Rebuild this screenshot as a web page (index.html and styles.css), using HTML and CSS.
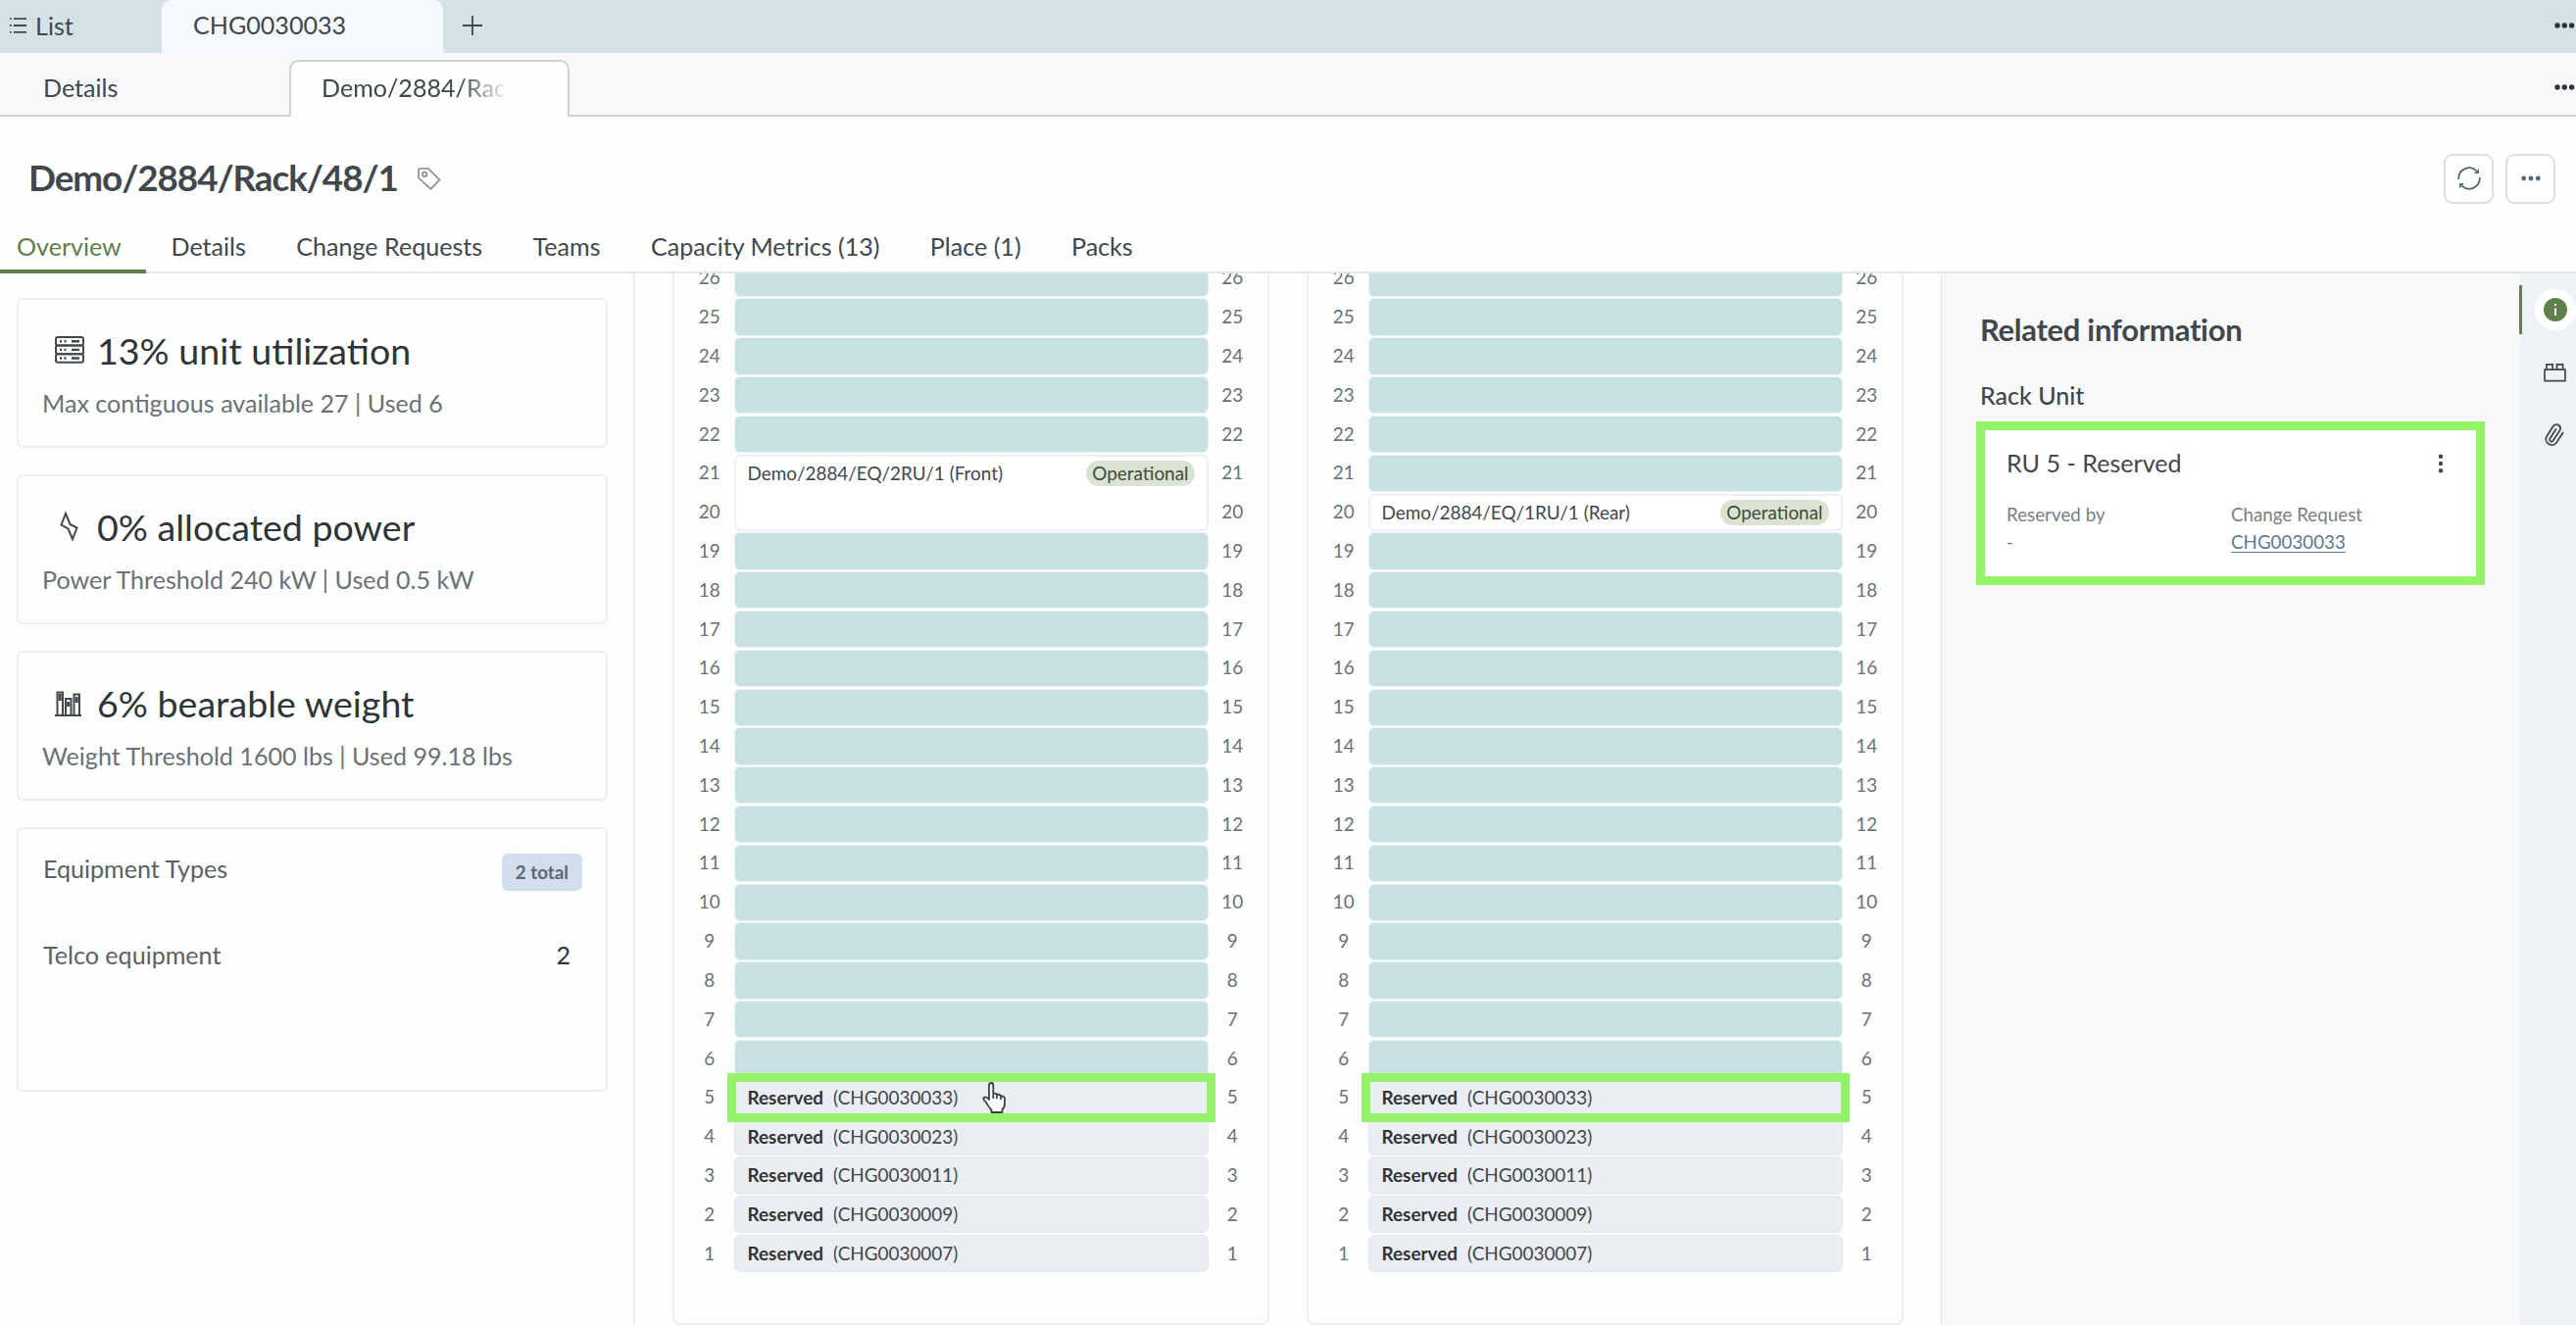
FILE: index.html
```
<!DOCTYPE html>
<html lang="en">
<head>
  <meta charset="utf-8">
  <title>Demo/2884/Rack/48/1</title>
  <link rel="stylesheet" href="styles.css">
</head>
<body>
  <div class="topbar">
    <div class="top-list">
      <svg class="icon-list" viewBox="0 0 18 16"><path d="M4 1.2H17M4 8H17M4 14.8H17M0 1.2H1.6M0 8H1.6M0 14.8H1.6"/></svg>
      List
    </div>
    <div class="top-tab">CHG0030033</div>
    <svg class="icon-plus" viewBox="0 0 20 20"><path d="M10 0V20M0 10H20"/></svg>
    <svg class="more" viewBox="0 0 22 6"><circle cx="3" cy="3" r="2.7"/><circle cx="10.3" cy="3" r="2.7"/><circle cx="17.6" cy="3" r="2.7"/></svg>
  </div>

  <div class="subbar">
    <div class="sub-tab">Details</div>
    <div class="sub-tab active"><span class="sub-label">Demo/2884/Rac</span></div>
    <svg class="more" viewBox="0 0 22 6"><circle cx="3" cy="3" r="2.7"/><circle cx="10.3" cy="3" r="2.7"/><circle cx="17.6" cy="3" r="2.7"/></svg>
  </div>

  <div class="header">
    <h1>Demo/2884/Rack/48/1</h1>
    <svg class="icon-tag" viewBox="0 0 24 23"><path d="M1 2.5Q1 1 2.5 1H11L22.5 12.5L13.5 21.8L1 10.5Z"/><circle cx="7.2" cy="6.8" r="2.3"/></svg>
    <div class="actions">
      <button class="btn">
        <svg class="icon-refresh" viewBox="0 0 24 24"><path d="M1.2 13A10.9 10.9 0 0 1 19.5 4.3M22.8 11A10.9 10.9 0 0 1 4.5 19.7"/><path class="tip" d="M17 7L22 7V2ZM7 17H2V22Z"/></svg>
      </button>
      <button class="btn">
        <svg class="icon-dots" viewBox="0 0 20 6"><circle cx="2.7" cy="3" r="2.4"/><circle cx="10" cy="3" r="2.4"/><circle cx="17.3" cy="3" r="2.4"/></svg>
      </button>
    </div>
  </div>

  <div class="tabs">
    <div class="tab active">Overview</div>
    <div class="tab">Details</div>
    <div class="tab">Change Requests</div>
    <div class="tab">Teams</div>
    <div class="tab">Capacity Metrics (13)</div>
    <div class="tab">Place (1)</div>
    <div class="tab">Packs</div>
  </div>

  <div class="main">
    <div class="metrics">
      <div class="card">
        <div class="card-title">
          <svg class="icon-rack" viewBox="0 0 30 28">
            <rect x="1" y="1" width="28" height="8.6" rx="2"/><rect x="1" y="9.6" width="28" height="8.6" rx="2"/><rect x="1" y="18.2" width="28" height="8.6" rx="2"/>
            <path d="M5 5.3H7M9.5 5.3H11.5M17 5.3H25M5 13.9H7M9.5 13.9H11.5M17 13.9H25M5 22.5H7M9.5 22.5H11.5M17 22.5H25"/>
          </svg>
          13% unit utilization
        </div>
        <div class="card-sub">Max contiguous available 27 | Used 6</div>
      </div>

      <div class="card">
        <div class="card-title">
          <svg class="icon-power" viewBox="0 0 30 28"><path d="M11 1L6.5 12.5L13.5 16.5L18 27L22.5 15.5L15.5 12Z"/></svg>
          0% allocated power
        </div>
        <div class="card-sub">Power Threshold 240 kW | Used 0.5 kW</div>
      </div>

      <div class="card">
        <div class="card-title">
          <svg class="icon-weight" viewBox="0 0 30 28"><path d="M0 27H27M2.5 26V3.500H8V26M11 26V10H16.500V26M19.500 26V5.500H25V26"/><path class="thick" d="M5.2 12V5M13.7 18V13M22.2 14V8"/></svg>
          6% bearable weight
        </div>
        <div class="card-sub">Weight Threshold 1600 lbs | Used 99.18 lbs</div>
      </div>

      <div class="card types">
        <div class="types-head">
          <span>Equipment Types</span>
          <span class="total">2 total</span>
        </div>
        <div class="types-row">
          <span>Telco equipment</span>
          <span class="count">2</span>
        </div>
      </div>
    </div>

    <div class="racks">
      <div class="rack"><div class="units" id="front"></div></div>
      <div class="rack"><div class="units" id="rear"></div></div>
    </div>

    <div class="side">
      <h2>Related information</h2>
      <h3>Rack Unit</h3>
      <div class="info">
        <div class="info-head">
          <span>RU 5 - Reserved</span>
          <svg class="icon-kebab" viewBox="0 0 6 20"><circle cx="3" cy="2.7" r="2.2"/><circle cx="3" cy="10" r="2.2"/><circle cx="3" cy="17.3" r="2.2"/></svg>
        </div>
        <div class="info-fields">
          <div>
            <div class="field-label">Reserved by</div>
            <div class="field-value">-</div>
          </div>
          <div>
            <div class="field-label">Change Request</div>
            <a class="field-value">CHG0030033</a>
          </div>
        </div>
      </div>
    </div>

    <div class="rail">
      <div class="rail-item active">
        <span class="halo">
          <svg class="icon-info" viewBox="0 0 24 24"><circle cx="12" cy="12" r="12"/><path d="M12 10.5V18M12 6V8"/></svg>
        </span>
      </div>
      <div class="rail-item">
        <svg class="icon-brick" viewBox="0 0 24 20"><path d="M1 6.5H23V18.5H1ZM3 6.5V1H9.5V6.5M14 6.5V1H20.5V6.5"/></svg>
      </div>
      <div class="rail-item">
        <svg class="icon-clip" viewBox="0 0 24 24"><path transform="rotate(-12 12 12)" d="M21.4 11L12.2 20.2A6 6 0 0 1 3.8 11.8L13 2.600A4 4 0 0 1 18.600 8.200L9.400 17.400A2 2 0 0 1 6.600 14.600L15.100 6.100"/></svg>
      </div>
    </div>
  </div>
  <script src="script.js"></script>
</body>
</html>
```

FILE: styles.css
```
:root {
  --text: #42474b;
  --text-secondary: #6c7174;
  --green: #5f7f4c;
  --highlight: #94f268;
  --border: #eceeef;
  --available: #c7e0e2;
  --reserved: #eaedf2;
}

* {
  box-sizing: border-box;
}

body {
  width: 2628px;
  height: 1352px;
  margin: 0;
  overflow: hidden;
  display: flex;
  flex-direction: column;
  font-family: Lato, "Liberation Sans", sans-serif;
  font-size: 25.1px;
  color: var(--text);
  background: #fdfefe;
}

svg {
  fill: none;
  stroke: currentColor;
  flex: none;
  overflow: visible;
}

/* Workspace tabs */
.topbar {
  display: flex;
  align-items: center;
  height: 54px;
  flex: none;
  background: #d4e2e8;
}

.top-list {
  display: flex;
  align-items: center;
  gap: 8px;
  width: 165px;
  padding: 0 0 3px 10px;
}

.icon-list {
  width: 18px;
  height: 16px;
  stroke-width: 1.8;
}

.top-tab {
  width: 287px;
  height: 54px;
  padding-left: 32px;
  line-height: 51px;
  border-radius: 10px 10px 0 0;
  background: #f5f9fb;
}

.icon-plus {
  width: 20px;
  height: 20px;
  margin: 0 0 3px 20px;
  stroke-width: 1.8;
}

.more {
  width: 22px;
  height: 6px;
  margin-left: auto;
  margin-bottom: 2px;
  fill: #2e3338;
  stroke: none;
}

.subbar {
  display: flex;
  align-items: center;
  height: 65px;
  flex: none;
  background: #f7f8f9;
  box-shadow: inset 0 -2px #cfd2d4;
}

.sub-tab {
  width: 295px;
  padding: 4px 0 0 44px;
}

.sub-tab.active {
  align-self: flex-end;
  width: 286px;
  height: 58px;
  padding: 0 0 0 31px;
  line-height: 52px;
  border: 2px solid #cfd2d4;
  border-bottom: 0;
  border-radius: 10px 10px 0 0;
  background: #fdfefe;
}

.sub-label {
  display: block;
  width: 200px;
  white-space: nowrap;
  -webkit-mask-image: linear-gradient(to right, #000 140px, transparent 192px);
  mask-image: linear-gradient(to right, #000 140px, transparent 192px);
}

.subbar .more {
  margin: 5px 0 0 auto;
}

/* Record header */
.header {
  display: flex;
  align-items: center;
  height: 110px;
  flex: none;
  padding: 16px 21px 0 29px;
}

h1 {
  margin: 0 20px 3px 0;
  font-size: 36.8px;
  font-weight: 700;
  letter-spacing: -1.05px;
}

.icon-tag {
  width: 24px;
  height: 23px;
  stroke: #85898c;
  stroke-width: 1.6;
}

.actions {
  display: flex;
  gap: 12px;
  margin-left: auto;
}

.btn {
  display: flex;
  align-items: center;
  justify-content: center;
  width: 51px;
  height: 51px;
  padding: 0;
  border: 2px solid #dcdee0;
  border-radius: 9px;
  color: #536878;
  background: #fff;
}

.icon-refresh {
  width: 24px;
  height: 24px;
  stroke-width: 1.8;
}

.icon-refresh .tip {
  fill: currentColor;
  stroke: none;
}

.icon-dots {
  width: 20px;
  height: 6px;
  fill: currentColor;
  stroke: none;
}

.tabs {
  display: flex;
  height: 50px;
  flex: none;
  border-bottom: 2px solid #e4e6e8;
}

.tab {
  height: 50px;
  padding: 0 25.7px;
  line-height: 44px;
}

.tab.active {
  padding: 0 25px 0 17px;
  color: var(--green);
  border-bottom: 4px solid var(--green);
}

/* Content */
.main {
  display: flex;
  flex: 1;
  min-height: 0;
}

.metrics {
  display: flex;
  flex-direction: column;
  gap: 27px;
  width: 648px;
  padding: 25px 26px 0 17px;
  border-right: 2px solid var(--border);
}

.card {
  height: 153px;
  padding: 28px 25px 0 24px;
  border: 2px solid var(--border);
  border-radius: 6px;
}

.card-title {
  display: flex;
  align-items: center;
  gap: 13px;
  height: 46px;
  padding-left: 13px;
  font-size: 37.6px;
  color: #2f3437;
}

.card-title svg {
  width: 30px;
  height: 28px;
  stroke: #43484b;
  stroke-width: 2;
}

.card-title .thick {
  stroke-width: 3;
}

.icon-rack path {
  stroke-width: 2.4;
}

.card-sub {
  margin-top: 16px;
  line-height: 30px;
  color: var(--text-secondary);
}

.card.types {
  height: 270px;
  padding: 25px 24px 0 25px;
}

.types-head,
.types-row {
  display: flex;
  justify-content: space-between;
  color: #5c6164;
}

.types-head {
  line-height: 30px;
}

.total {
  height: 38px;
  padding: 0 14px;
  border-radius: 6px;
  font-size: 18.8px;
  font-weight: 700;
  line-height: 38px;
  color: #5c6977;
  background: #d2deec;
}

.types-row {
  margin-top: 50px;
  padding-right: 12px;
  line-height: 30px;
}

.count {
  color: #2f3437;
}

.racks {
  display: flex;
  gap: 39px;
  width: 1332px;
  padding-left: 38px;
}

.rack {
  display: flex;
  flex-direction: column;
  justify-content: flex-end;
  width: 609px;
  height: 1073px;
  padding-bottom: 51px;
  overflow: hidden;
  border: 2px solid var(--border);
  border-top: 0;
  border-radius: 0 0 8px 8px;
}

.rack + .rack {
  margin-left: -1px;
}

.units {
  display: grid;
  grid-template-columns: 60.5px 484px 1fr;
  grid-auto-rows: 39.82px;
  flex: none;
  font-size: 18.9px;
}

.unit-no {
  display: flex;
  align-items: center;
  justify-content: center;
  padding: 0 0 2px 11px;
  color: var(--text-secondary);
}

.unit-no.right {
  padding: 0 11px 2px 0;
}

.slot {
  position: relative;
  display: flex;
  align-items: center;
  margin: 0.8px 0;
  padding: 0 13px 1px;
  border: 1px solid #e9f1f7;
  border-radius: 6px;
  background: var(--available);
}

.slot.reserved {
  border-color: #e4e7ec;
  background: var(--reserved);
}

.slot.reserved b {
  margin-right: 10px;
  color: #2f3437;
}

.slot.equipment {
  align-items: flex-start;
  justify-content: space-between;
  padding: 4px 12px;
  line-height: 26px;
  border: 2px solid #eceff6;
  background: #fff;
}

.badge {
  height: 26px;
  padding: 0 6px;
  border-radius: 13px;
  color: #3f4b38;
  background: #dae3d2;
}

.slot.highlight::after {
  content: "";
  position: absolute;
  z-index: 1;
  inset: -7px -8px;
  border: 9px solid var(--highlight);
}

.cursor {
  position: absolute;
  left: 252px;
  top: 2px;
  z-index: 2;
  width: 24px;
  height: 32px;
}

/* Related information */
.side {
  width: 590px;
  padding: 38px 35px 0;
  border-left: 1px solid #e6e8ea;
  background: #f8f9fb;
}

h2 {
  margin: 0 0 0 4px;
  font-size: 31px;
  font-weight: 700;
  letter-spacing: -0.3px;
  line-height: 38px;
}

h3 {
  margin: 33px 0 0 4px;
  font-size: 25px;
  font-weight: 500;
  line-height: 30px;
}

.info {
  height: 167px;
  margin-top: 12px;
  padding: 18px 31px 0 22px;
  border: 9px solid var(--highlight);
  background: #fff;
}

.info-head {
  display: flex;
  align-items: center;
  justify-content: space-between;
  line-height: 30px;
}

.icon-kebab {
  width: 6px;
  height: 20px;
  margin: 2px 2px 0 0;
  fill: #42474b;
  stroke: none;
}

.info-fields {
  display: grid;
  grid-template-columns: 229px 1fr;
  margin-top: 24px;
  font-size: 18.8px;
  line-height: 27.5px;
  color: #7a7f82;
}

.info-fields a {
  color: #60788c;
  text-decoration: underline;
  text-underline-offset: 3px;
}

.rail {
  display: flex;
  flex-direction: column;
  width: 58px;
  padding-top: 12px;
  background: #eef2f6;
}

.rail-item {
  display: flex;
  align-items: center;
  justify-content: center;
  height: 50px;
  margin-bottom: 14px;
  padding-left: 14px;
}

.rail-item.active {
  padding-left: 12px;
  border-left: 3px solid var(--green);
}

.halo {
  display: flex;
  align-items: center;
  justify-content: center;
  width: 42px;
  height: 42px;
  flex: none;
  border-radius: 50%;
  background: #fff;
}

.icon-info {
  width: 24px;
  height: 24px;
  fill: var(--green);
  stroke: none;
}

.icon-info path {
  stroke: #fff;
  stroke-width: 2;
}

.icon-brick {
  width: 23px;
  height: 19px;
  stroke-width: 1.8;
}

.icon-clip {
  width: 24px;
  height: 24px;
  stroke-width: 1.8;
}
```

FILE: script.js
```
const reserved = {
  5: 'CHG0030033',
  4: 'CHG0030023',
  3: 'CHG0030011',
  2: 'CHG0030009',
  1: 'CHG0030007'
};

const cursor = '<svg class="cursor" viewBox="0 0 24 32"><path fill="#fff" stroke="#3a3e42" stroke-width="1.8" stroke-linejoin="round" d="M7 18V3.5Q7 1 9.2 1Q11.3 1 11.3 3.5V12Q14 11 15 13Q18 12 19 14.5Q23 14 23 18V22Q23 26 20.5 28V31H9.5V28.5Q6 25 4.5 21.5L1.5 18Q1 15.5 3.5 15.5Q5.5 16 7 18ZM11.3 12V17M15 13V17M19 14.5V18"/></svg>';

// equipment is keyed by its top unit, size is in rack units
function drawRack(id, equipment) {
  const rack = document.getElementById(id);
  let html = '';
  for (let u = 26, row = 1; u >= 1; u--, row++) {
    html += `<div class="unit-no" style="grid-area: ${row} / 1">${u}</div>`;
    html += `<div class="unit-no right" style="grid-area: ${row} / 3">${u}</div>`;

    const eq = equipment[u];
    const covered = equipment[u + 1] && equipment[u + 1].size > 1;
    if (eq) {
      html += `<div class="slot equipment" style="grid-area: ${row} / 2 / span ${eq.size}"><span>${eq.name}</span><span class="badge">Operational</span></div>`;
    } else if (reserved[u]) {
      const hl = u === 5 ? ' highlight' : '';
      html += `<div class="slot reserved${hl}" style="grid-area: ${row} / 2"><b>Reserved</b>(${reserved[u]})${hl && id === 'front' ? cursor : ''}</div>`;
    } else if (!covered) {
      html += `<div class="slot" style="grid-area: ${row} / 2"></div>`;
    }
  }
  rack.innerHTML = html;
}

drawRack('front', { 21: { name: 'Demo/2884/EQ/2RU/1 (Front)', size: 2 } });
drawRack('rear', { 20: { name: 'Demo/2884/EQ/1RU/1 (Rear)', size: 1 } });
```
